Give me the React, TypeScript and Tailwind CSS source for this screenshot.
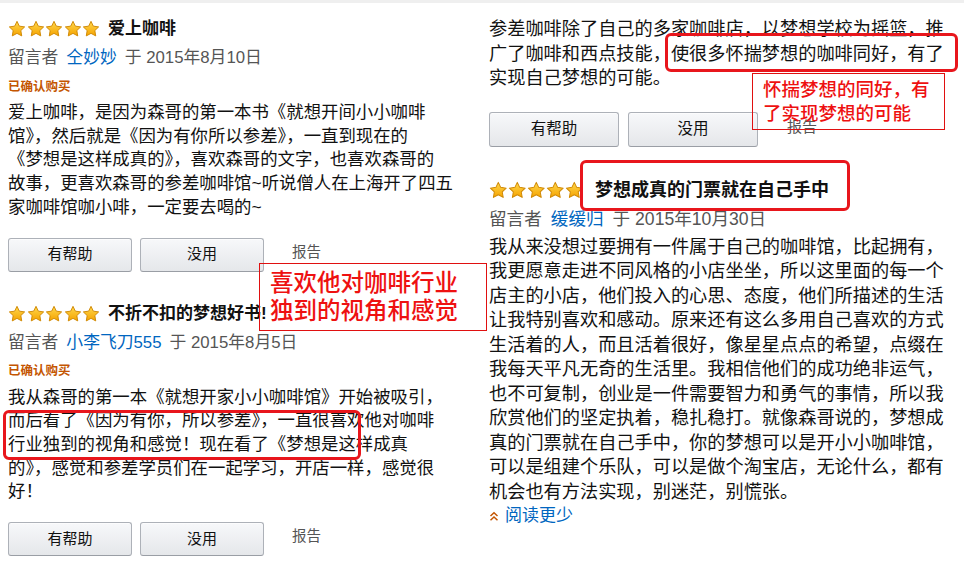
import React, { useId } from 'react';

const FONT = '"Liberation Sans", "Noto Sans CJK SC", sans-serif';

const Star: React.FC<{ size: number }> = ({ size }) => {
  const id = useId();
  return (
    <svg width={size} height={size} viewBox="0 0 24 24" className="block">
      <defs>
        <linearGradient id={id} x1="0" y1="0" x2="0" y2="1">
          <stop offset="0" stopColor="#ffd84d" />
          <stop offset="1" stopColor="#f5a300" />
        </linearGradient>
      </defs>
      <polygon
        points="12,1.8 15.1,8.2 22.2,9.2 17.1,14.1 18.3,21.2 12,17.8 5.7,21.2 6.9,14.1 1.8,9.2 8.9,8.2"
        fill={`url(#${id})`}
        stroke="#d08a06"
        strokeWidth="1.3"
        strokeLinejoin="round"
      />
    </svg>
  );
};

const Stars: React.FC<{ size: number }> = ({ size }) => (
  <div className="flex items-center gap-[0.5px]">
    {[0, 1, 2, 3, 4].map((i) => (
      <Star key={i} size={size} />
    ))}
  </div>
);

const Buttons: React.FC<{ big?: boolean; className?: string }> = ({ big, className }) => {
  const btn = big
    ? 'w-[130px] h-[35px] text-[15.5px]'
    : 'w-[124px] h-[34px] text-[15px]';
  return (
    <div className={`flex items-center ${big ? 'gap-[9px]' : 'gap-2'} ${className ?? ''}`}>
      {['有帮助', '没用'].map((t) => (
        <div
          key={t}
          className={`${btn} flex items-center justify-center rounded-[3px] border border-[#adb1b8] border-b-[#9a9ea5] bg-gradient-to-b from-[#f7f8fa] to-[#e5e7ea] text-[#111] shadow-[0_1px_0_rgba(255,255,255,0.6)_inset]`}
        >
          {t}
        </div>
      ))}
      <span className={`${big ? 'ml-[20px] text-[15px]' : 'ml-[20px] text-[14.5px]'} text-[#555] -mt-[4px]`}>报告</span>
    </div>
  );
};

const leftOne = [
  '爱上咖啡，是因为森哥的第一本书《就想开间小小咖啡',
  '馆》，然后就是《因为有你所以参差》，一直到现在的',
  '《梦想是这样成真的》，喜欢森哥的文字，也喜欢森哥的',
  '故事，更喜欢森哥的参差咖啡馆~听说僧人在上海开了四五',
  '家咖啡馆咖小啡，一定要去喝的~',
];

const leftTwo = [
  '我从森哥的第一本《就想开家小小咖啡馆》开始被吸引，',
  '而后看了《因为有你，所以参差》，一直很喜欢他对咖啡',
  '行业独到的视角和感觉！现在看了《梦想是这样成真',
  '的》，感觉和参差学员们在一起学习，开店一样，感觉很',
  '好！',
];

const rightTop = [
  '参差咖啡除了自己的多家咖啡店，以梦想学校为摇篮，推',
  '广了咖啡和西点技能，使很多怀揣梦想的咖啡同好，有了',
  '实现自己梦想的可能。',
];

const rightBody = [
  '我从来没想过要拥有一件属于自己的咖啡馆，比起拥有，',
  '我更愿意走进不同风格的小店坐坐，所以这里面的每一个',
  '店主的小店，他们投入的心思、态度，他们所描述的生活',
  '让我特别喜欢和感动。原来还有这么多用自己喜欢的方式',
  '生活着的人，而且活着很好，像星星点点的希望，点缀在',
  '我每天平凡无奇的生活里。我相信他们的成功绝非运气，',
  '也不可复制，创业是一件需要智力和勇气的事情，所以我',
  '欣赏他们的坚定执着，稳扎稳打。就像森哥说的，梦想成',
  '真的门票就在自己手中，你的梦想可以是开小小咖啡馆，',
  '可以是组建个乐队，可以是做个淘宝店，无论什么，都有',
  '机会也有方法实现，别迷茫，别慌张。',
];

const LeftReview: React.FC<{ title: string; name: string; date: string; lines: string[]; className?: string }> = ({
  title,
  name,
  date,
  lines,
  className,
}) => (
  <div className={className}>
    <div className="h-6 flex items-center gap-2">
      <Stars size={18} />
      <span className="font-bold text-[17px] text-[#111]">{title}</span>
    </div>
    <div className="mt-[5px] h-6 flex items-center gap-[8px] text-[16.8px] text-[#555]">
      <span>留言者</span>
      <span className="text-[#0066c0]">{name}</span>
      <span>于 {date}</span>
    </div>
    <div className="mt-2 h-[18px] flex items-center text-[12.5px] font-bold text-[#c45500]">已确认购买</div>
    <div className="mt-[5px] text-[17.4px] leading-[23.7px] text-[#111]">
      {lines.map((l) => (
        <div key={l} className="whitespace-nowrap">
          {l}
        </div>
      ))}
    </div>
    <Buttons className="mt-[18px]" />
  </div>
);

export default function App() {
  return (
    <div className="relative w-[964px] h-[565px] overflow-hidden bg-white" style={{ fontFamily: FONT }}>
      <div className="h-[3px] bg-[#efefef]" />
      <div className="flex">
        {/* left column */}
        <div className="w-[481px] pl-2">
          <LeftReview className="mt-[14px]" title="爱上咖啡" name="仝妙妙" date="2015年8月10日" lines={leftOne} />
          <LeftReview className="mt-[30px]" title="不折不扣的梦想好书!" name="小李飞刀555" date="2015年8月5日" lines={leftTwo} />
        </div>

        {/* right column */}
        <div className="flex-1 pl-2">
          <div className="mt-[14px] text-[18.2px] leading-[24.5px] text-[#111]">
            {rightTop.map((l) => (
              <div key={l} className="whitespace-nowrap">
                {l}
              </div>
            ))}
          </div>
          <Buttons big className="mt-[21px]" />

          <div className="mt-[32px] h-6 flex items-center gap-[11px]">
            <Stars size={18.6} />
            <span className="relative z-10 font-bold text-[18px] text-[#111]">梦想成真的门票就在自己手中</span>
          </div>
          <div className="mt-[5px] h-6 flex items-center gap-[9px] text-[17.6px] text-[#555]">
            <span>留言者</span>
            <span className="text-[#0066c0]">缓缓归</span>
            <span>于 2015年10月30日</span>
          </div>
          <div className="mt-[3px] text-[18.2px] leading-[24.5px] text-[#111]">
            {rightBody.map((l) => (
              <div key={l} className="whitespace-nowrap">
                {l}
              </div>
            ))}
            <div className="flex items-center gap-[6px] text-[17px] text-[#0066c0]">
              <svg width="10" height="11" viewBox="0 0 10 11" className="block">
                <path d="M1.5 5 L5 1.8 L8.5 5 M1.5 9.2 L5 6 L8.5 9.2" fill="none" stroke="#c45500" strokeWidth="1.5" />
              </svg>
              <span>阅读更少</span>
            </div>
          </div>
        </div>
      </div>

      {/* annotations */}
      <div className="absolute left-[259px] top-[263px] w-[228px] h-[68px] border border-[#e01010] pl-[10px] pt-[5px] text-[23.5px] leading-[28px] font-medium text-[#ee1111] whitespace-nowrap">
        <div>喜欢他对咖啡行业</div>
        <div>独到的视角和感觉</div>
      </div>
      <div className="absolute left-[3px] top-[410px] w-[358px] h-[50px] border-[3px] border-[#e8161c] rounded-[6px]" />
      <div className="absolute left-[665px] top-[33px] w-[293px] h-[39px] border-[3px] border-[#e8161c] rounded-[6px]" />
      <div className="absolute left-[752px] top-[73px] w-[193px] h-[57px] border border-[#e01010] pl-[10px] pt-[4px] text-[18.5px] leading-[24px] font-medium text-[#ee1111] whitespace-nowrap">
        <div>怀揣梦想的同好，有</div>
        <div>了实现梦想的可能</div>
      </div>
      <div className="absolute left-[580px] top-[160px] w-[270px] h-[51px] bg-white border-[3px] border-[#e8161c] rounded-[6px]" />
    </div>
  );
}
